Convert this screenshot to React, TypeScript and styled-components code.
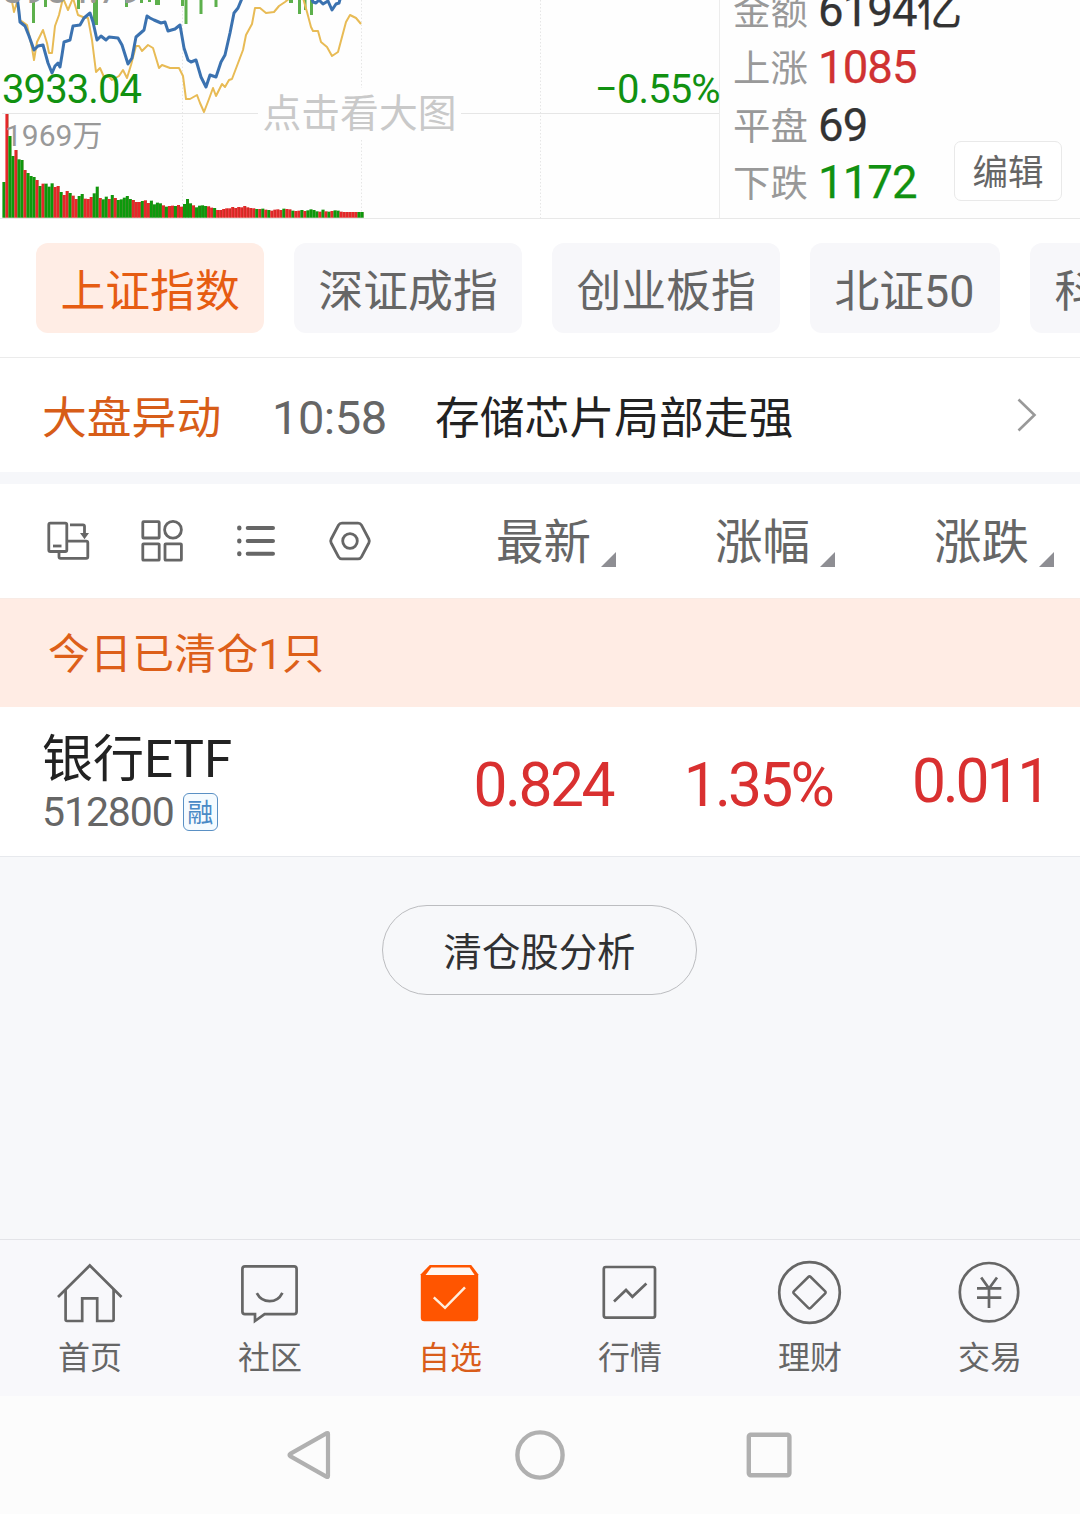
import React from 'react';
import styled, { createGlobalStyle } from 'styled-components';

const GlobalStyle = createGlobalStyle`
  * { box-sizing: border-box; }
  html, body { margin: 0; padding: 0; }
  body {
    width: 1080px;
    height: 1514px;
    overflow: hidden;
    background: #fff;
    font-family: Roboto, "Noto Sans CJK SC", sans-serif;
  }
  svg { display: block; flex: none; }
`;

const Screen = styled.div`
  display: flex;
  flex-direction: column;
  width: 1080px;
  height: 1514px;
  overflow: hidden;
  background: #fff;
`;

/* ---------- market overview ---------- */

const Overview = styled.section`
  display: flex;
  height: 219px;
  border-bottom: 1px solid #e8e8e8;
  background: #fefefe;
  overflow: hidden;
`;

const ChartPane = styled.div`
  position: relative;
  flex: none;
  width: 720px;
  border-right: 1px solid #ececec;
`;

const ChartLabel = styled.span<{ $x: number; $y: number; $size: number; $color: string; $ls?: number }>`
  position: absolute;
  left: ${(p) => p.$x}px;
  top: ${(p) => p.$y}px;
  font-size: ${(p) => p.$size}px;
  line-height: 48px;
  letter-spacing: ${(p) => p.$ls ?? 0}px;
  color: ${(p) => p.$color};
  white-space: nowrap;
`;

const Watermark = styled.span`
  position: absolute;
  left: 258px;
  top: 88px;
  width: 203px;
  height: 52px;
  font-size: 38.8px;
  line-height: 52px;
  text-align: center;
  white-space: nowrap;
  color: #c9c9c9;
  background: #fefefe;
`;

const Stats = styled.div`
  display: flex;
  flex: 1;
  justify-content: space-between;
  align-items: flex-end;
  padding: 0 18px 0 13px;
`;

const StatList = styled.div`
  display: flex;
  flex-direction: column;
  flex: none;
  width: 200px;
  margin-bottom: 7px;
`;

const Stat = styled.div`
  display: flex;
  align-items: center;
  height: 57.3px;
  line-height: 57px;
  white-space: nowrap;
`;

const StatName = styled.span`
  flex: none;
  width: 85px;
  padding-top: 4px;
  font-size: 37.4px;
  color: #999;
`;

const StatValue = styled.span<{ $color: string }>`
  font-size: 45.5px;
  letter-spacing: -0.9px;
  color: ${(p) => p.$color};
  -webkit-text-stroke: 0.25px ${(p) => p.$color};
`;

const EditButton = styled.button`
  flex: none;
  width: 108px;
  height: 60px;
  margin: 0 0 17px;
  padding: 5px 0 0;
  border: 1px solid #e9e9e9;
  border-radius: 7px;
  background: #fff;
  font: 35.5px/53px Roboto, "Noto Sans CJK SC", sans-serif;
  color: #666;
`;

/* ---------- index tabs ---------- */

const IndexTabs = styled.nav`
  display: flex;
  gap: 30px;
  height: 139px;
  padding: 24px 0 0 36px;
  border-bottom: 1px solid #ebebeb;
  overflow: hidden;
`;

const IndexTab = styled.div<{ $active?: boolean; $width?: number }>`
  flex: none;
  width: ${(p) => p.$width ?? 228}px;
  height: 90px;
  padding-left: 24.5px;
  border-radius: 12px;
  font-size: 44.8px;
  line-height: 97px;
  white-space: nowrap;
  color: ${(p) => (p.$active ? '#e65c12' : '#666')};
  background: ${(p) => (p.$active ? '#ffede5' : '#f7f7fa')};
`;

/* ---------- news ---------- */

const News = styled.section`
  display: flex;
  align-items: center;
  height: 126px;
  padding: 2px 43px 0 42px;
  border-bottom: 12px solid #f6f7fa;
  font-size: 44.8px;
  line-height: 60px;
  white-space: nowrap;
`;

const NewsTag = styled.span`
  width: 230px;
  padding-top: 6px;
  color: #d75d18;
`;

const NewsTime = styled.span`
  width: 163px;
  padding-top: 4px;
  font-size: 47px;
  letter-spacing: -0.5px;
  color: #666;
`;

const NewsTitle = styled.span`
  flex: 1;
  padding-top: 6px;
  color: #222;
`;

/* ---------- list header ---------- */

const ListHeader = styled.section`
  display: flex;
  align-items: center;
  height: 114px;
  padding-right: 26px;
`;

const Tools = styled.div`
  display: flex;
  align-items: center;
  gap: 50px;
  width: 397px;
  padding-left: 46px;
`;

const HeaderCell = styled.div`
  display: flex;
  flex: none;
  justify-content: flex-end;
  align-items: flex-end;
  gap: 10px;
  width: 219px;
  padding-top: 4px;
  font-size: 47.5px;
  line-height: 60px;
  color: #666;
`;

const SortMark = styled.i`
  width: 15px;
  height: 15px;
  margin-bottom: 6px;
  background: #8e8e93;
  clip-path: polygon(100% 0, 100% 100%, 0 100%);
`;

/* ---------- holdings ---------- */

const Banner = styled.div`
  height: 109px;
  padding-left: 48px;
  border-top: 1px solid #f8ebe5;
  background: #ffece4;
  font-size: 41.8px;
  letter-spacing: 0.3px;
  line-height: 111px;
  color: #dd5f19;
`;

const Holding = styled.section`
  display: flex;
  align-items: center;
  height: 150px;
  padding-right: 26px;
  border-bottom: 1px solid #e7e9ed;
  background: #fff;
`;

const Security = styled.div`
  display: flex;
  flex-direction: column;
  width: 397px;
  padding: 5px 0 0 42px;
`;

const SecurityName = styled.span`
  height: 56px;
  font-size: 51px;
  line-height: 57px;
  color: #222;
`;

const SecurityMeta = styled.div`
  display: flex;
  align-items: center;
  gap: 9px;
  height: 50px;
  font-size: 41px;
  letter-spacing: -1.1px;
  color: #666;
`;

const MarginBadge = styled.span`
  width: 35px;
  height: 38px;
  border: 1.5px solid #5a90c4;
  border-radius: 6px;
  font-size: 26px;
  line-height: 38px;
  letter-spacing: 0;
  text-align: center;
  color: #4a8ac6;
  background: #f5fbff;
`;

const Value = styled.span<{ $raise?: number; $shift?: number; $ls: number }>`
  width: 219px;
  padding-top: 8px;
  padding-right: ${(p) => p.$shift ?? 3}px;
  padding-bottom: ${(p) => p.$raise ?? 0}px;
  font-size: 60.5px;
  line-height: 72px;
  letter-spacing: ${(p) => p.$ls}px;
  text-align: right;
  color: #d93030;
`;

const Empty = styled.section`
  display: flex;
  flex: 1;
  justify-content: center;
  align-items: flex-start;
  padding-top: 48px;
  background: #f7f8fa;
`;

const AnalysisButton = styled.button`
  width: 315px;
  height: 90px;
  margin-right: 1px;
  padding: 6px 0 0;
  border: 1px solid #bcbdc0;
  border-radius: 45px;
  background: transparent;
  font: 38.4px/82px Roboto, "Noto Sans CJK SC", sans-serif;
  color: #303133;
`;

/* ---------- bottom bars ---------- */

const TabBar = styled.nav`
  display: grid;
  grid-template-columns: repeat(6, 1fr);
  height: 157px;
  border-top: 1px solid #e3e4e8;
  background: #f8f8fb;
`;

const TabItem = styled.div<{ $active?: boolean }>`
  display: flex;
  flex-direction: column;
  align-items: center;
  padding-top: 16px;
  font-size: 32px;
  line-height: 48px;
  color: ${(p) => (p.$active ? '#d95d1b' : '#666')};
`;

const TabText = styled.span`
  margin-top: 6px;
`;

const SystemBar = styled.div`
  display: flex;
  justify-content: center;
  gap: 179px;
  height: 118px;
  padding-top: 34px;
  background: #fcfcfc;
`;

/* ---------- chart ---------- */

const BLUE =
  '17,-4 19,12 20,22 25,26 29,36 34,50 38,46 43,45 48,63 52,73 55,66 58,63 60,67 62,55 64,42 70,40 73,26 80,25 84,18 90,13 93,22 97,40 101,36 106,40 109,37 118,38 122,45 128,64 132,58 136,37 144,30 147,16 150,18 154,20 161,23 165,22 168,31 175,29 180,25 184,48 188,60 191,62 196,60 201,77 206,87 210,75 216,77 221,62 225,55 230,33 234,13 238,8 243,-4';
const BLUE_TAIL = '311,-4 313,2 316,3 319,0 323,4 328,1 332,10 336,4 339,3 341,-4';
const AMBER =
  '11,-4 14,12 17,2 20,20 27,25 32,48 34,60 37,42 43,30 47,43 49,53 52,53 55,26 59,15 63,-2 68,10 73,-2 78,15 83,17 88,18 92,40 96,72 100,68 104,77 109,77 112,80 119,76 123,70 127,78 131,65 136,46 139,46 142,51 148,45 153,48 159,68 162,65 170,68 179,68 183,76 186,99 190,99 197,95 200,103 204,112 209,99 213,88 216,96 222,84 225,87 229,80 232,79 243,50 246,35 252,24 255,8 260,8 266,13 274,12 279,6 285,2 290,-2 303,-2 307,12 311,27 313,31 318,31 321,42 327,47 332,56 338,52 346,22 350,15 356,18 361,24';

const TICKS: Array<[number, number, number]> = [
  [32, 3, 23], [44, 3, 7], [77, 3, 9], [93, 5, 25], [125, 3, 7], [140, 3, 3], [148, 3, 2], [155, 5, 5],
  [181, 3, 6], [184.5, 3, 24], [199.5, 3, 14], [214.5, 3, 7], [298, 3, 14], [304, 2.5, 10], [310, 3, 15], [289, 4, 3],
];

/* Top of each minute's volume bar, in thirds of a pixel; R/G marks the direction. */
const VOLUME =
  'G546 R342 G408 G468 R450 G478 G480 R510 G519 G528 G531 R540 G558 R551 G551 G560 G550 R561 R558 G576 R585 R573 G579 R587 R597 G588 G582 R596 R597 R591 G580 G560 R594 G598 G590 R597 G585 R594 G600 G598 G593 G588 G597 R600 R606 R606 G603 R601 R609 G602 G613 G608 G610 R616 G620 R618 R617 G618 R615 R620 G612 G597 G610 R616 G622 G617 G616 G618 R619 R623 G624 R630 R630 R627 R625 R625 R621 R624 R621 R622 R618 R622 R624 R625 G627 R627 G626 R629 G630 R632 R629 R628 R630 G626 R627 R628 G632 R633 R632 G630 R633 G631 G628 G630 G634 R635 G629 R634 G635 R633 G631 G632 R635 R636 R636 R636 R636 R636 G636 G636'
    .split(' ')
    .map((v) => ({ up: v[0] === 'R', top: Number(v.slice(1)) / 3 }));

const Chart = () => (
  <svg width="719" height="218" viewBox="0 0 719 218">
    <g stroke="#e6e6e6" fill="none">
      <path d="M2 113.5H719" />
      <path d="M182.5 0V218M361.5 0V218M540.5 0V218" strokeDasharray="1.5 2" />
    </g>
    {TICKS.map(([x, w, h]) => (
      <rect key={x} x={x} y="0" width={w} height={h} fill="#5db04c" />
    ))}
    <polyline points={AMBER} fill="none" stroke="#e8bb55" strokeWidth="2" strokeLinejoin="round" />
    <polyline points={BLUE} fill="none" stroke="#3b72b0" strokeWidth="3" strokeLinejoin="round" />
    <polyline points={BLUE_TAIL} fill="none" stroke="#3b72b0" strokeWidth="3" strokeLinejoin="round" />
    {VOLUME.map((v, i) => (
      <g key={i}>
        <rect x={2.4 + i * 3.01} y={v.top} width="3" height={217.7 - v.top} fill={v.up ? '#e8262a' : '#0c9a0c'} />
        <rect x={4.8 + i * 3.01} y={v.top} width="0.6" height={217.7 - v.top} fill="#5c5a14" opacity="0.5" />
      </g>
    ))}
  </svg>
);

/* ---------- icons ---------- */

const RotateIcon = () => (
  <svg width="44" height="44" viewBox="46 519 44 44" fill="none" stroke="#666" strokeWidth="2.8">
    <rect x="48.8" y="523.2" width="18" height="28.3" rx="1.5" />
    <path d="M53 546H61.5" />
    <path d="M67 541.2H86.2Q87.8 541.2 87.8 542.8V556.8Q87.8 558.4 86.2 558.4H60.6Q59 558.4 59 556.8V552" />
    <path d="M70 524.8H83Q84.5 524.8 84.5 526.3V534" />
    <path d="M80 533H89L84.5 539.3Z" fill="#666" stroke="none" />
  </svg>
);

const GridIcon = () => (
  <svg width="44" height="44" viewBox="140 519 44 44" fill="none" stroke="#666" strokeWidth="2.8">
    <rect x="142.8" y="521.6" width="16.4" height="16.4" rx="0.8" />
    <circle cx="173" cy="529.8" r="8.4" />
    <rect x="142.8" y="543.8" width="16.4" height="16.4" rx="0.8" />
    <rect x="165" y="543.8" width="16.4" height="16.4" rx="0.8" />
  </svg>
);

const ListIcon = () => (
  <svg width="44" height="44" viewBox="234 519 44 44" fill="none" stroke="#666" strokeWidth="4" strokeLinecap="round">
    <path d="M247.7 528H273M247.7 541H273M247.7 553.8H273" />
    <path d="M239.3 527.7V528.3M239.3 540.7V541.3M239.3 553.5V554.1" strokeWidth="4.4" />
  </svg>
);

const HexIcon = () => (
  <svg width="44" height="44" viewBox="328 519 44 44" fill="none" stroke="#666" strokeWidth="2.8" strokeLinejoin="round">
    <path d="M342 523.2H358Q360.4 523.2 361.5 525.2L368.8 539Q369.8 541 368.8 543L361.5 556.8Q360.4 558.8 358 558.8H342Q339.6 558.8 338.5 556.8L331.2 543Q330.2 541 331.2 539L338.5 525.2Q339.6 523.2 342 523.2Z" />
    <circle cx="350" cy="541" r="7.3" />
  </svg>
);

const Chevron = () => (
  <svg width="20" height="36" viewBox="1018 398 20 36" fill="none" stroke="#999" strokeWidth="2.6">
    <path d="M1019.5 399.5L1035.5 415L1019.5 430.5" />
  </svg>
);

const TabSvg = ({ x, children }: { x: number; children: React.ReactNode }) => (
  <svg width="70" height="72" viewBox={`${x - 35} 1256 70 72`} fill="none" stroke="#666" strokeWidth="2.7">
    {children}
  </svg>
);

const TABS: Array<{ name: string; active?: boolean; icon: React.ReactNode }> = [
  {
    name: '首页',
    icon: (
      <TabSvg x={90}>
        <path d="M58 1297L89.8 1265.5L121.5 1297" />
        <path d="M65.6 1289V1319.6Q65.6 1321 67 1321H82.2V1298.4H97.2V1321H112.2Q113.6 1321 113.6 1319.6V1289" />
      </TabSvg>
    ),
  },
  {
    name: '社区',
    icon: (
      <TabSvg x={270}>
        <path d="M245 1266.4H294Q296.6 1266.4 296.6 1269V1311.5Q296.6 1314.2 294 1314.2H264.6L255 1321V1314.2H245Q242.4 1314.2 242.4 1311.5V1269Q242.4 1266.4 245 1266.4Z" />
        <path d="M256.8 1293.2Q261 1301.2 269.6 1301.2Q278.2 1301.2 282.4 1292.8" />
      </TabSvg>
    ),
  },
  {
    name: '自选',
    active: true,
    icon: (
      <TabSvg x={450}>
        <path d="M429.8 1265H471.2L478.2 1274.2V1317.8Q478.2 1321.3 474.7 1321.3H424.3Q420.8 1321.3 420.8 1317.8V1274.2Z" fill="#ff5500" stroke="none" />
        <path d="M431.2 1267.6H469.6L474.6 1275H425.6Z" fill="#fff8f2" stroke="none" />
        <path d="M433.8 1297.4L445 1307.8L465 1287.3" stroke="#ffeedd" strokeWidth="2.5" />
      </TabSvg>
    ),
  },
  {
    name: '行情',
    icon: (
      <TabSvg x={630}>
        <rect x="603.8" y="1267" width="51.2" height="50.6" rx="2" />
        <path d="M614 1301.5L626 1290L632.4 1296.8L646.4 1283.5" />
      </TabSvg>
    ),
  },
  {
    name: '理财',
    icon: (
      <TabSvg x={810}>
        <circle cx="809.5" cy="1292.5" r="30.3" />
        <path d="M810.7 1277L825 1291.2Q826.2 1292.4 825 1293.6L810.7 1307.8Q809.5 1309 808.3 1307.8L794 1293.6Q792.8 1292.4 794 1291.2L808.3 1277Q809.5 1275.8 810.7 1277Z" strokeWidth="2.5" />
      </TabSvg>
    ),
  },
  {
    name: '交易',
    icon: (
      <TabSvg x={990}>
        <circle cx="989" cy="1292.2" r="29.2" />
        <path d="M981.2 1277.5L989 1288.5L997 1277.5M977 1288.4H1001.3M977 1297.6H1001.3M989 1288V1308" />
      </TabSvg>
    ),
  },
];

const App = () => (
  <>
    <GlobalStyle />
    <Screen>
      <Overview>
        <ChartPane>
          <Chart />
          <ChartLabel $x={2} $y={-34} $size={40} $ls={-0.9} $color="#999">3954.79</ChartLabel>
          <ChartLabel $x={2} $y={66} $size={40} $ls={-0.9} $color="#119111">3933.04</ChartLabel>
          <ChartLabel $x={5} $y={112} $size={30} $color="#999">1969万</ChartLabel>
          <ChartLabel $x={595} $y={66} $size={40} $ls={-0.9} $color="#119111">−0.55%</ChartLabel>
          <Watermark>点击看大图</Watermark>
        </ChartPane>
        <Stats>
          <StatList>
            <Stat><StatName>金额</StatName><StatValue $color="#333">6194亿</StatValue></Stat>
            <Stat><StatName>上涨</StatName><StatValue $color="#d03232">1085</StatValue></Stat>
            <Stat><StatName>平盘</StatName><StatValue $color="#333">69</StatValue></Stat>
            <Stat><StatName>下跌</StatName><StatValue $color="#119111">1172</StatValue></Stat>
          </StatList>
          <EditButton>编辑</EditButton>
        </Stats>
      </Overview>

      <IndexTabs>
        <IndexTab $active>上证指数</IndexTab>
        <IndexTab>深证成指</IndexTab>
        <IndexTab>创业板指</IndexTab>
        <IndexTab $width={190}>北证50</IndexTab>
        <IndexTab>科创50</IndexTab>
      </IndexTabs>

      <News>
        <NewsTag>大盘异动</NewsTag>
        <NewsTime>10:58</NewsTime>
        <NewsTitle>存储芯片局部走强</NewsTitle>
        <Chevron />
      </News>

      <ListHeader>
        <Tools>
          <RotateIcon />
          <GridIcon />
          <ListIcon />
          <HexIcon />
        </Tools>
        <HeaderCell>最新<SortMark /></HeaderCell>
        <HeaderCell>涨幅<SortMark /></HeaderCell>
        <HeaderCell>涨跌<SortMark /></HeaderCell>
      </ListHeader>

      <Banner>今日已清仓1只</Banner>

      <Holding>
        <Security>
          <SecurityName>银行ETF</SecurityName>
          <SecurityMeta>512800<MarginBadge>融</MarginBadge></SecurityMeta>
        </Security>
        <Value $ls={-2.5}>0.824</Value>
        <Value $ls={-2.8}>1.35%</Value>
        <Value $ls={-3.2} $shift={6} $raise={8}>0.011</Value>
      </Holding>

      <Empty>
        <AnalysisButton>清仓股分析</AnalysisButton>
      </Empty>

      <TabBar>
        {TABS.map((t) => (
          <TabItem key={t.name} $active={t.active}>
            {t.icon}
            <TabText>{t.name}</TabText>
          </TabItem>
        ))}
      </TabBar>

      <SystemBar>
        <svg width="50" height="50" viewBox="286 1430 50 50" fill="none" stroke="#b0b0b0" strokeWidth="4.2" strokeLinejoin="round">
          <path d="M326.8 1433.2L290.6 1453.6Q288.4 1455 290.6 1456.4L326.8 1476.8Q328 1477.4 328 1476V1434Q328 1432.6 326.8 1433.2Z" />
        </svg>
        <svg width="50" height="50" viewBox="515 1430 50 50" fill="none" stroke="#b0b0b0" strokeWidth="4.4">
          <circle cx="540" cy="1455" r="22.6" />
        </svg>
        <svg width="50" height="50" viewBox="744 1430 50 50" fill="none" stroke="#b0b0b0" strokeWidth="4.4">
          <rect x="748.8" y="1434.7" width="40.6" height="40.6" rx="2" />
        </svg>
      </SystemBar>
    </Screen>
  </>
);

export default App;
